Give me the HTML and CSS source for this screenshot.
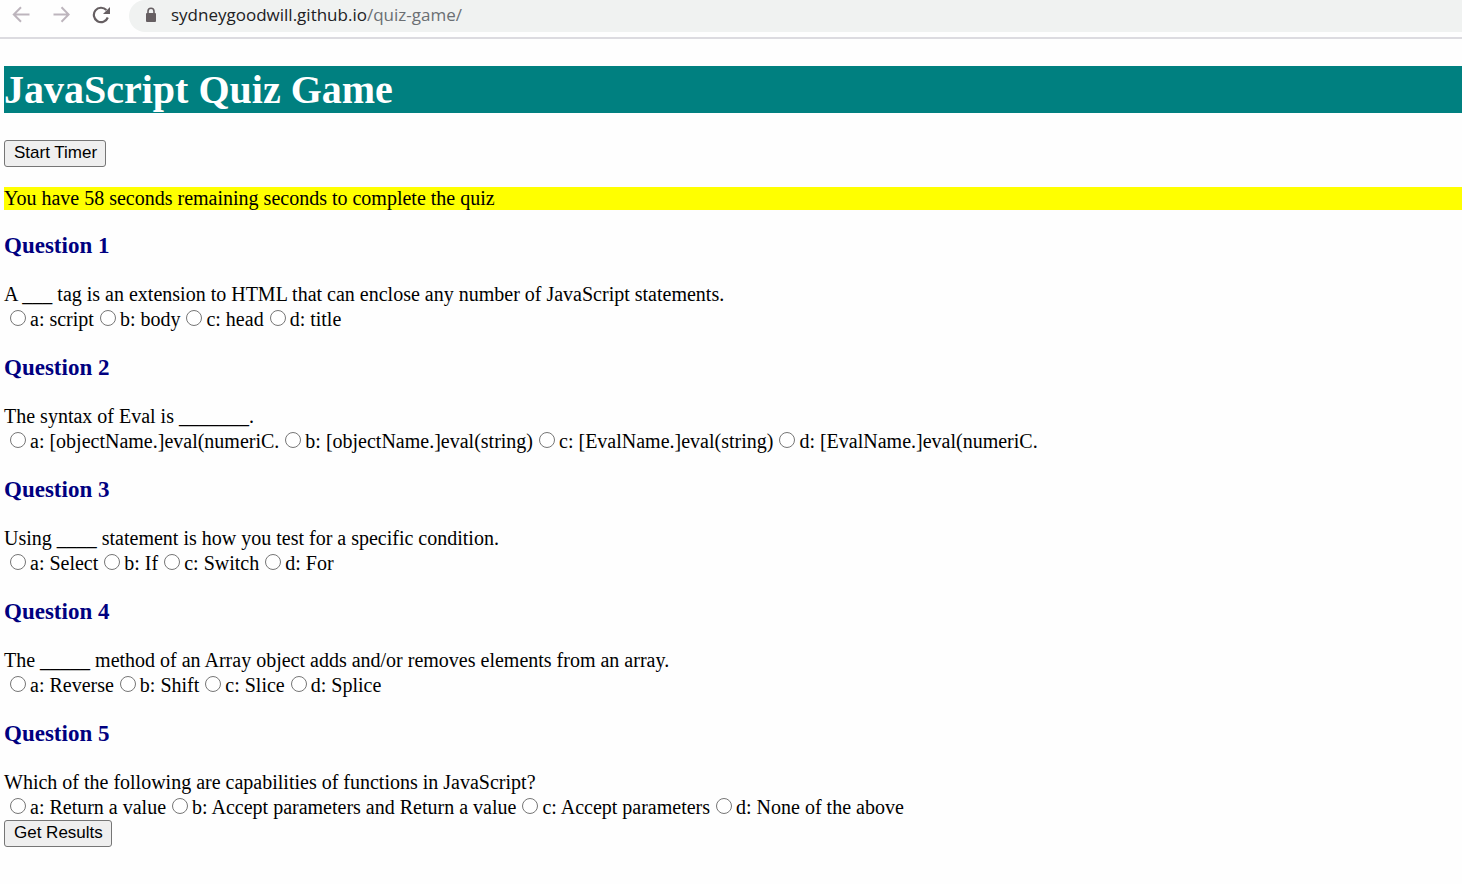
FILE: index.html
```html
<!DOCTYPE html>
<html lang="en">
<head>
<meta charset="utf-8">
<title>JavaScript Quiz Game</title>
<link rel="stylesheet" href="styles.css">
</head>
<body>
<header class="toolbar">
  <button class="nav nav-off" type="button" aria-label="Back"><svg width="18" height="18" viewBox="0 0 18 18" fill="none" stroke="currentColor" stroke-width="2"><path d="M17.5 8.5H2.5M9 1.3L1.8 8.5L9 15.7"/></svg></button>
  <button class="nav nav-off" type="button" aria-label="Forward"><svg width="18" height="18" viewBox="0 0 18 18" fill="none" stroke="currentColor" stroke-width="2"><path d="M1.5 8.5H16.5M9.5 1.3L16.7 8.5L9.5 15.7"/></svg></button>
  <button class="nav" type="button" aria-label="Reload"><svg width="18" height="18" viewBox="0 0 18 18"><path d="M15.8 11.5A7.2 7.2 0 1 1 14.4 4.1" fill="none" stroke="currentColor" stroke-width="2.2"/><path d="M18 1V8H11Z" fill="currentColor"/></svg></button>
  <div class="address">
    <svg class="lock" width="12" height="16" viewBox="0 0 12 16"><path d="M3 7V4.2A3 3 0 0 1 9 4.2V7" fill="none" stroke="currentColor" stroke-width="1.6"/><rect x="1" y="6" width="10" height="9" rx="1" fill="currentColor"/></svg>
    <a class="url" href="#">sydneygoodwill.github.io<span class="path">/quiz-game/</span></a>
  </div>
</header>
<main class="page">
  <h1 class="title">JavaScript Quiz Game</h1>
  <button class="btn" type="button">Start Timer</button>
  <p class="timer">You have 58 seconds remaining seconds to complete the quiz</p>
  <form class="quiz">
    <section class="question">
      <h3 class="heading">Question 1</h3>
      <p class="prompt">A ___ tag is an extension to HTML that can enclose any number of JavaScript statements.</p>
      <div class="answers">
        <label class="answer"><input class="radio" type="radio" name="q1">a: script</label>
        <label class="answer"><input class="radio" type="radio" name="q1">b: body</label>
        <label class="answer"><input class="radio" type="radio" name="q1">c: head</label>
        <label class="answer"><input class="radio" type="radio" name="q1">d: title</label>
      </div>
    </section>
    <section class="question">
      <h3 class="heading">Question 2</h3>
      <p class="prompt">The syntax of Eval is _______.</p>
      <div class="answers">
        <label class="answer"><input class="radio" type="radio" name="q2">a: [objectName.]eval(numeriC.</label>
        <label class="answer"><input class="radio" type="radio" name="q2">b: [objectName.]eval(string)</label>
        <label class="answer"><input class="radio" type="radio" name="q2">c: [EvalName.]eval(string)</label>
        <label class="answer"><input class="radio" type="radio" name="q2">d: [EvalName.]eval(numeriC.</label>
      </div>
    </section>
    <section class="question">
      <h3 class="heading">Question 3</h3>
      <p class="prompt">Using ____ statement is how you test for a specific condition.</p>
      <div class="answers">
        <label class="answer"><input class="radio" type="radio" name="q3">a: Select</label>
        <label class="answer"><input class="radio" type="radio" name="q3">b: If</label>
        <label class="answer"><input class="radio" type="radio" name="q3">c: Switch</label>
        <label class="answer"><input class="radio" type="radio" name="q3">d: For</label>
      </div>
    </section>
    <section class="question">
      <h3 class="heading">Question 4</h3>
      <p class="prompt">The _____ method of an Array object adds and/or removes elements from an array.</p>
      <div class="answers">
        <label class="answer"><input class="radio" type="radio" name="q4">a: Reverse</label>
        <label class="answer"><input class="radio" type="radio" name="q4">b: Shift</label>
        <label class="answer"><input class="radio" type="radio" name="q4">c: Slice</label>
        <label class="answer"><input class="radio" type="radio" name="q4">d: Splice</label>
      </div>
    </section>
    <section class="question">
      <h3 class="heading">Question 5</h3>
      <p class="prompt">Which of the following are capabilities of functions in JavaScript?</p>
      <div class="answers">
        <label class="answer"><input class="radio" type="radio" name="q5">a: Return a value</label>
        <label class="answer"><input class="radio" type="radio" name="q5">b: Accept parameters and Return a value</label>
        <label class="answer"><input class="radio" type="radio" name="q5">c: Accept parameters</label>
        <label class="answer"><input class="radio" type="radio" name="q5">d: None of the above</label>
      </div>
    </section>
    <button class="btn" type="button">Get Results</button>
  </form>
</main>
</body>
</html>
```
FILE: styles.css
```css
* { box-sizing: border-box; }
body {
  margin: 0;
  background: #fefefe;
  color: #000;
  font: 20px/24px "Liberation Serif", "Times New Roman", serif;
}
.toolbar {
  display: flex;
  align-items: flex-start;
  height: 39px;
  padding-left: 12px;
  border-bottom: 2px solid #dcdbe0;
}
.nav {
  display: flex;
  width: 18px;
  margin: 6px 22px 0 0;
  padding: 0;
  border: 0;
  background: none;
  color: #665f62;
}
.nav-off { color: #bdb5bd; }
.address {
  display: flex;
  flex: 1;
  align-items: center;
  height: 32px;
  margin-left: -3px;
  padding: 0 0 2px 16px;
  border-radius: 16px 0 0 16px;
  background: #f0f2f1;
}
.lock { color: #665f62; }
.url {
  margin-left: 14px;
  color: #202124;
  font: 17px/24px "Open Sans", "Noto Sans", sans-serif;
  text-decoration: none;
}
.path { color: #6b6f73; }
.page { padding: 27px 0 38px 4px; }
.title {
  margin: 0 0 27px;
  background: #008080;
  color: #fff;
  font-size: 40px;
  line-height: 47px;
}
.btn {
  display: block;
  height: 27px;
  padding: 0 8px 2px 9px;
  border: 1px solid #767676;
  border-radius: 3px;
  background: #efefef;
  color: #000;
  font: 17px/24px "Liberation Sans", Arial, sans-serif;
}
.timer {
  margin: 20px 0 23px;
  background: #ff0;
  line-height: 23px;
}
.question + .question { margin-top: 23px; }
.heading {
  margin: 0 0 23px;
  color: #000080;
  font-size: 23px;
  line-height: 26px;
}
.prompt { margin: 0; line-height: 25px; }
.answers {
  display: flex;
  flex-wrap: wrap;
  gap: 0 6px;
  padding-left: 6px;
}
.answer {
  display: flex;
  align-items: flex-start;
  line-height: 25px;
}
.radio {
  appearance: none;
  width: 16px;
  height: 16px;
  margin: 3px 4px 0 0;
  border: 1px solid #767676;
  border-radius: 50%;
  background: #fff;
}
.radio:checked { box-shadow: inset 0 0 0 3px #fff; background: #0075ff; }
```
